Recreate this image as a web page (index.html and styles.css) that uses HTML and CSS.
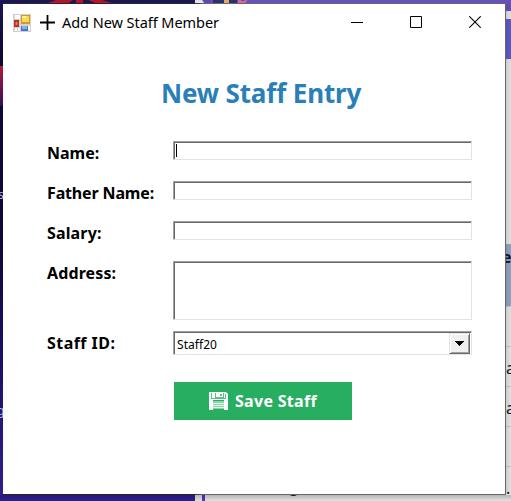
FILE: index.html
```
<!DOCTYPE html>
<html lang="en">
<head>
<meta charset="utf-8">
<title>Add New Staff Member</title>
<link rel="stylesheet" href="styles.css">
</head>
<body>
<svg class="backdrop" width="511" height="501" viewBox="0 0 511 501" aria-hidden="true">
  <defs>
    <linearGradient id="side" x1="0" y1="0" x2="0" y2="1">
      <stop offset="0" stop-color="#1b1851"/><stop offset=".12" stop-color="#0d0830"/>
      <stop offset=".5" stop-color="#0e093d"/><stop offset=".72" stop-color="#19106a"/><stop offset="1" stop-color="#2e2090"/>
    </linearGradient>
    <linearGradient id="glow" x1="0" y1="0" x2="0" y2="1">
      <stop offset="0" stop-color="#b5173e"/><stop offset="1" stop-color="#2f1155"/>
    </linearGradient>
    <linearGradient id="shade" x1="0" y1="0" x2="1" y2="0">
      <stop offset="0" stop-color="#000" stop-opacity=".1"/><stop offset="1" stop-color="#000" stop-opacity="0"/>
    </linearGradient>
    <linearGradient id="shadeDown" x1="0" y1="0" x2="0" y2="1">
      <stop offset="0" stop-color="#000" stop-opacity=".2"/><stop offset="1" stop-color="#000" stop-opacity="0"/>
    </linearGradient>
  </defs>
  <rect width="195" height="501" fill="url(#side)"/>
  <rect y="66" width="3" height="40" fill="url(#glow)"/>
  <path d="M45 4 56 0H73L67 4ZM76 0h7v4h-7zM88 0h14l13 4H98Z" fill="#b41528"/>
  <rect x="195" width="316" height="501" fill="#e2e2e2"/>
  <rect x="205" width="306" height="11" fill="#6550bd"/>
  <path d="M202 0h9v4h-6z" fill="#5e48b8"/>
  <path d="M213 0h11v4h-11zM229 0h8v4h-8z" fill="#29336b"/>
  <path d="M224 0h5v4h-5z" fill="#e9a66e"/>
  <path d="M238 0h3v1h4V0h2q-1 4-5 4h-4z" fill="#dc6796"/>
  <rect x="505" y="19" width="6" height="40" fill="#5c5bc4"/>
  <rect x="505" y="244" width="6" height="62" fill="#91a3c0"/>
  <path d="M505 306.500h6M505 346.500h6M505 386.500h6M505 426.500h6M505 466.500h6" stroke="#c4c4df"/>
  <rect x="202" y="490" width="3" height="11" fill="#5534c1"/>
  <text class="sheet-bold" x="502" y="263">e</text>
  <text class="sheet" x="506" y="374">a</text>
  <text class="sheet" x="496" y="414">na</text>
  <text class="sheet" x="506" y="494">.</text>
  <text class="sheet" x="289" y="492">g</text>
  <text class="side-text" x="-2" y="199">s</text>
  <text class="side-text" x="-3" y="415">g</text>
  <rect x="506" y="4" width="5" height="490" fill="url(#shade)"/>
  <rect y="495" width="511" height="6" fill="url(#shadeDown)"/>
</svg>
<main class="window">
  <header class="titlebar">
    <svg class="app-icon" width="18" height="18" viewBox="0 0 18 18">
      <path fill="#d1d1d1" d="M0 0h18v18H0z"/>
      <path fill="#fff" d="M2 1h5v4H2zM2 14h2v3H2zM5 14h2v3H5zM15 12h2v4h-2z"/>
      <path fill="#b73028" d="M1 6h5v7H1z"/><path fill="#f17a69" d="M2.500 8h2v3h-2z"/>
      <path fill="#d59a1b" d="M8 1h9v9H8z"/><path fill="#fbd957" d="M9 2h7v6H9z"/><path fill="#fff0a5" d="M9 2h4v2H9z"/>
      <path fill="#4476cb" d="M8 12h7v5H8z"/><path fill="#83b3f3" d="M9 12h5v3H9z"/>
    </svg>
    <svg class="plus" width="15" height="15" viewBox="0 0 15 15"><path d="M7.500 0v15M0 7.500h15" stroke="#000" stroke-width="1.800"/></svg>
    <span class="caption">Add New Staff Member</span>
    <div class="controls">
      <svg width="12" height="12"><path d="M0 6.500h12" stroke="#000"/></svg>
      <svg width="12" height="12"><path d="M.5.5h11v11H.5z" fill="none" stroke="#000"/></svg>
      <svg width="12" height="12"><path d="m.3.300 11.400 11.400M11.700.300.300 11.700" stroke="#000" stroke-width="1.100"/></svg>
    </div>
  </header>
  <h1>New Staff Entry</h1>
  <form class="form">
    <label>Name:</label><div class="field"><i class="caret"></i></div>
    <label class="t-father">Father Name:</label><div class="field"></div>
    <label class="t-salary">Salary:</label><div class="field"></div>
    <label class="t-address">Address:</label><div class="field area"></div>
    <label class="t-id">Staff ID:</label>
    <div class="field combo"><span class="value">Staff20</span>
      <span class="drop"><svg width="9" height="5" viewBox="0 0 9 5"><path d="M0 0h9v1H8v1H7v1H6v1H5v1H4V4H3V3H2V2H1V1H0z"/></svg></span>
    </div>
    <button type="button" class="save">
      <svg width="19" height="18" viewBox="0 0 19 18">
        <path fill="#fff" d="M0 0h17l2 2v16H0z"/>
        <path fill="#58c084" d="M2 1h1v5h13V2h1v5H2zM6 1h1v4h7V1h1v5H6zM11 2h2v2h-2z"/>
        <path fill="#8dd4ab" d="M4 9h11v8H4z"/>
        <path fill="#e2f5e9" d="M4 11h11v1H4zM4 13h11v1H4zM4 15h11v1H4z"/>
        <path fill="#27ae60" d="M4 8h11v1H4zM4 17h11v1H4z"/>
      </svg>
      <span>Save Staff</span>
    </button>
  </form>
</main>
</body>
</html>
```
FILE: styles.css
```
* { box-sizing: border-box; }
html, body { margin: 0; width: 511px; height: 501px; overflow: hidden; }
body { padding: 3px 0 0 3px; font-family: "Noto Sans", sans-serif; color: #000; }
.backdrop { position: absolute; left: 0; top: 0; z-index: -1; }
.sheet, .sheet-bold { font-size: 16px; fill: #151525; }
.sheet-bold { font-weight: 700; }
.side-text { font-size: 12px; fill: #a9b4d8; }
.window {
  width: 503px; height: 492px; background: #fff;
  border: solid #666; border-width: 1px 1px 1px 0;
  border-image: linear-gradient(90deg, #252340 38%, #68686b 40%) 1;
}
.titlebar { display: flex; align-items: center; height: 37px; padding-left: 10px; }
.plus { margin: 0 0 0 9px; }
.caption { margin: -2px 0 0 7px; font-size: 14.500px; line-height: 20px; letter-spacing: -.05px; white-space: nowrap; }
.controls { display: flex; gap: 47px; margin: -1px 24px 0 auto; }
.controls svg { display: block; }
h1 { margin: 34px 0 0 158px; font-size: 26px; line-height: 36px; letter-spacing: -.15px; color: #2980b9; white-space: nowrap; }
.form {
  display: grid; grid-template-columns: 126px 299px;
  grid-template-rows: 40px 40px 40px 70px 51px 38px;
  margin: 30px 0 0 44px; align-items: start;
}
label { font-size: 16px; line-height: 24px; font-weight: 700; white-space: nowrap; }
.t-father { letter-spacing: -.15px; }
.t-salary { letter-spacing: .15px; }
.t-address { letter-spacing: .12px; }
.t-id { letter-spacing: .45px; }
.field {
  position: relative; height: 19px; background: #fff; border: 1px solid;
  border-color: #a0a0a0 #e3e3e3 #e3e3e3 #a0a0a0; box-shadow: inset 1px 1px #696969;
}
.area { height: 59px; }
.caret { display: block; width: 1px; height: 13px; margin: 2px; background: #000; }
.combo { display: flex; height: 24px; padding: 1px 1px 0 3px; justify-content: space-between; }
.value { font-size: 12px; line-height: 23px; letter-spacing: .05px; }
.drop {
  width: 21px; height: 21px; display: flex; align-items: center; justify-content: center;
  background: #f0f0f0; border: 1px solid; border-color: #e3e3e3 #696969 #696969 #e3e3e3;
  box-shadow: inset 1px 1px #fff, inset -1px -1px #a0a0a0;
}
.save {
  grid-column: 2; width: 178px; height: 38px; margin-left: 1px; padding: 0 0 0 35px;
  display: flex; align-items: center; gap: 7px; border: 0; background: #27ae60;
  color: #fff; font: 700 16px/24px "Noto Sans", sans-serif; letter-spacing: .3px; white-space: nowrap;
}
```
